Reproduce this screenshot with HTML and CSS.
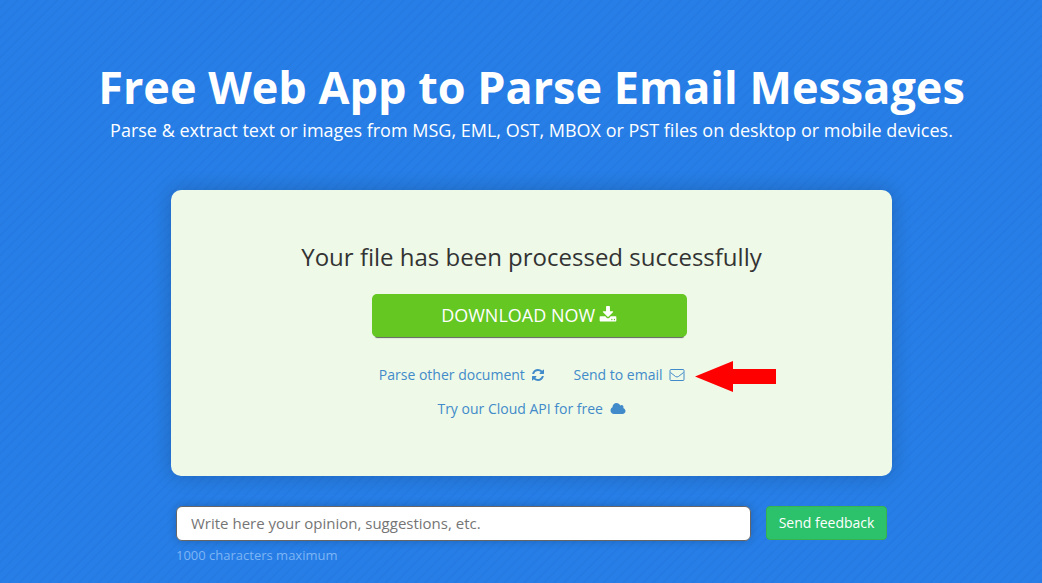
FILE: index.html
```html
<!DOCTYPE html>
<html lang="en">
<head>
<meta charset="utf-8">
<title>Free Web App to Parse Email Messages</title>
<link rel="stylesheet" href="styles.css">
</head>
<body>
<main class="page">
  <header class="hero">
    <h1 class="title">Free Web App to Parse Email Messages</h1>
    <p class="subtitle">Parse &amp; extract text or images from MSG, EML, OST, MBOX or PST files on desktop or mobile devices.</p>
  </header>
  <section class="card">
    <h2 class="status">Your file has been processed successfully</h2>
    <button class="download" type="button">DOWNLOAD NOW
      <svg class="icon-download" viewBox="0 0 1792 1792" aria-hidden="true"><path d="M1344 1344q0-26-19-45t-45-19-45 19-19 45 19 45 45 19 45-19 19-45zm256 0q0-26-19-45t-45-19-45 19-19 45 19 45 45 19 45-19 19-45zm128-224v320q0 40-28 68t-68 28h-1472q-40 0-68-28t-28-68v-320q0-40 28-68t68-28h465l135 136q58 56 136 56t136-56l136-136h464q40 0 68 28t28 68zm-325-569q17 41-14 70l-448 448q-18 19-45 19t-45-19l-448-448q-31-29-14-70 17-39 59-39h256v-448q0-26 19-45t45-19h256q26 0 45 19t19 45v448h256q42 0 59 39z"/></svg>
    </button>
    <div class="links">
      <a class="link" href="#">Parse other document
        <svg class="icon" viewBox="0 0 1792 1792" aria-hidden="true"><path d="M1639 1056q0 5-1 7-64 268-268 434.500t-478 166.500q-146 0-282.500-55t-243.500-157l-129 129q-19 19-45 19t-45-19-19-45v-448q0-26 19-45t45-19h448q26 0 45 19t19 45-19 45l-137 137q71 66 161 102t187 36q134 0 250-65t186-179q11-17 53-117 8-23 30-23h192q13 0 22.500 9.500t9.500 22.500zm25-800v448q0 26-19 45t-45 19h-448q-26 0-45-19t-19-45 19-45l138-138q-148-137-349-137-134 0-250 65t-186 179q-11 17-53 117-8 23-30 23h-199q-13 0-22.500-9.500t-9.500-22.500v-7q65-268 270-434.500t480-166.500q146 0 284 55.500t245 156.500l130-129q19-19 45-19t45 19 19 45z"/></svg></a>
      <div class="send">
        <a class="link" href="#">Send to email
          <svg class="icon icon-wide" viewBox="0 0 16 14" aria-hidden="true"><rect class="line" x="1" y="1.500" width="14" height="11" rx="1"/><path class="line" d="M1.500 4.500 6.500 8.500Q8 9.500 9.500 8.500L14.500 4.500"/></svg></a>
        <svg class="arrow" viewBox="0 0 81 31" aria-hidden="true"><path d="M0 15.500 38 0V8H81V23H38V31Z"/></svg>
      </div>
    </div>
    <a class="link" href="#">Try our Cloud API for free
      <svg class="icon icon-wide" viewBox="0 0 2048 1792" aria-hidden="true"><path d="M1984 1152q0 159-112.500 271.500t-271.500 112.500h-1088q-185 0-316.500-131.500t-131.500-316.500q0-132 71-241.500t187-163.500q-2-28-2-43 0-212 150-362t362-150q158 0 286.500 88t187.500 230q70-62 166-62 106 0 181 75t75 181q0 75-41 138 129 30 213 134.500t84 239.500z"/></svg></a>
  </section>
  <form class="feedback">
    <div class="field">
      <input class="opinion" id="opinion" type="text" maxlength="1000" placeholder="Write here your opinion, suggestions, etc." aria-label="Your opinion">
      <label class="hint" for="opinion">1000 characters maximum</label>
    </div>
    <button class="submit" type="button">Send feedback</button>
  </form>
</main>
</body>
</html>
```
FILE: styles.css
```css
* { box-sizing: border-box; }

body {
  margin: 0;
  min-height: 100vh;
  font-family: "Open Sans", sans-serif;
  font-size: 14px;
  background: #267de6 repeating-linear-gradient(135deg, #277ee6 0, #277ee6 4px, #257ae1 6px, #277ee6 7px);
}

.page {
  padding: 59px 0 16px 21px;
}

.hero {
  text-align: center;
  color: #fff;
}

.title {
  margin: 0;
  font-size: 45px;
  line-height: 56px;
  font-weight: 700;
}

.subtitle {
  margin: 0;
  font-size: 18px;
  line-height: 30px;
}

.card {
  display: flex;
  flex-direction: column;
  align-items: center;
  width: 721px;
  max-width: 100%;
  margin: 45px auto 0;
  padding: 50px 20px;
  border-radius: 10px;
  background: #eef9e8;
  box-shadow: 0 0 20px rgba(0, 0, 0, 0.2);
}

.status {
  margin: 0;
  font-size: 24px;
  line-height: 34px;
  font-weight: 400;
  color: #333;
}

.download {
  width: 315px;
  height: 43px;
  margin: 20px 5px 0 0;
  padding: 0 0 2px;
  border: 0;
  border-radius: 5px;
  background: #65c722;
  box-shadow: 0 4px 1px -3px rgba(0, 0, 0, 0.6);
  font-family: inherit;
  font-size: 18px;
  line-height: 24px;
  color: #fff;
}

.icon-download {
  width: 18px;
  height: 18px;
  margin-left: -1px;
  vertical-align: -2px;
  fill: currentColor;
}

.links {
  display: flex;
  gap: 28px;
  margin: 21px 0 0 1px;
}

.link {
  line-height: 34px;
  color: #428bca;
  text-decoration: none;
}

.icon {
  width: 14px;
  height: 14px;
  margin-left: 3px;
  vertical-align: -2px;
  fill: currentColor;
}

.icon-wide { width: 16px; }

.line {
  fill: none;
  stroke: currentColor;
}

.send { position: relative; }

.arrow {
  position: absolute;
  top: 3px;
  left: 100%;
  width: 81px;
  height: 31px;
  margin-left: 10px;
  fill: #f00;
}

.feedback {
  display: flex;
  align-items: flex-start;
  gap: 15px;
  width: 711px;
  max-width: 100%;
  margin: 30px auto 0;
}

.field { flex: 1; }

.opinion {
  display: block;
  width: 100%;
  height: 35px;
  padding: 0 14px 2px;
  border: 1px solid #666;
  border-radius: 6px;
  background: #fff;
  box-shadow: 0 0 10px rgba(0, 0, 0, 0.2);
  font-family: inherit;
  font-size: 15px;
  color: #333;
}

.opinion::placeholder { color: #757575; }

.hint {
  display: block;
  margin-top: 4px;
  font-size: 13px;
  line-height: 20px;
  color: #7db5f5;
}

.submit {
  width: 121px;
  height: 34px;
  padding: 0 0 2px;
  border: 1px solid #38b24d;
  border-radius: 4px;
  background: #2cc26b;
  font-family: inherit;
  font-size: 14px;
  color: #fff;
}
```
